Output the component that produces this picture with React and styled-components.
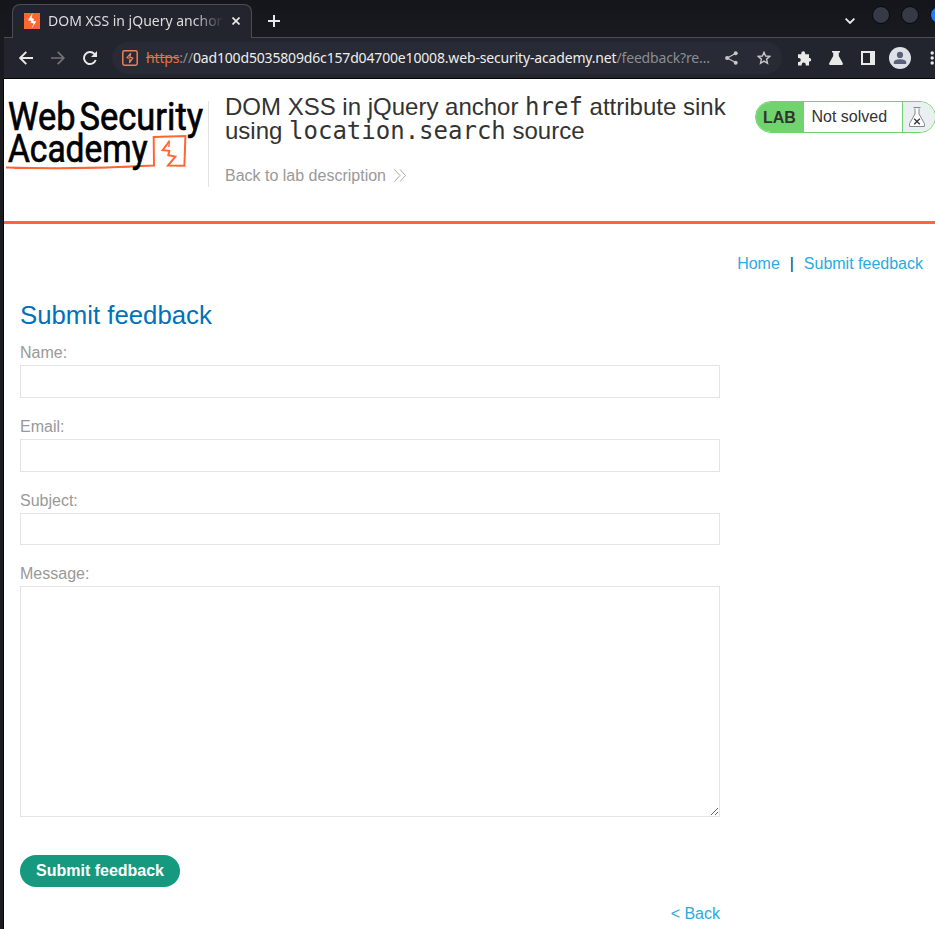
import React from 'react';
import styled, { createGlobalStyle } from 'styled-components';

const GlobalStyle = createGlobalStyle`
  * { box-sizing: border-box; }
  html, body { margin: 0; padding: 0; overflow: hidden; }
  body { background: #fff; font-family: "Liberation Sans", Arial, sans-serif; font-size: 16px; color: #333332; }
`;

const Desktop = styled.div`
  width: 935px;
  height: 929px;
  padding-left: 4px;
  overflow: hidden;
  background: linear-gradient(90deg, #1b1b20 0 3px, #08080a 3px 4px, #fff 4px);
`;

const Chrome = styled.div`
  height: 79px;
  margin-left: -4px;
  padding-left: 4px;
  background: linear-gradient(180deg, #15161c, #191a20 36px);
  font-family: "Noto Sans", sans-serif;
  overflow: hidden;
`;

const TabStrip = styled.div`
  height: 38px;
  display: flex;
  align-items: flex-end;
  border-bottom: 1px solid #4b4d54;
`;

const Tab = styled.div`
  display: flex;
  flex: none;
  align-items: center;
  width: 240px;
  height: 34px;
  margin: 0 0 -1px 8px;
  padding: 0 9px 1px 11px;
  border: 1px solid #4b4d54;
  border-bottom: 0;
  border-radius: 8px 8px 0 0;
  background: #23252e;
`;

const TabTitle = styled.div`
  flex: none;
  width: 176px;
  margin-left: 8px;
  overflow: hidden;
  white-space: nowrap;
  font-size: 14px;
  line-height: 20px;
  color: #dcdcdc;
  mask-image: linear-gradient(90deg, #000 145px, transparent 176px);
`;

const Icon = styled.svg`
  display: block;
  flex: none;
  width: ${p => p.$w}px;
  height: ${p => p.$h || p.$w}px;
  margin-left: ${p => p.$ml || 0}px;
  margin-top: ${p => p.$mt || 0}px;
  color: ${p => p.$color || '#e9e9e7'};
  fill: none;
  stroke: currentColor;
`;

const StripButton = styled.div`
  display: flex;
  align-items: center;
  height: 33px;
  margin-left: ${p => p.$ml}px;
`;

const WindowDots = styled.div`
  display: flex;
  gap: 11px;
  align-self: flex-start;
  margin: 6px 0 0 17px;
`;

const Dot = styled.div`
  flex: none;
  width: 18px;
  height: 18px;
  border: 1px solid #08090c;
  border-radius: 50%;
  background: ${p => (p.$active ? '#2777ff' : '#353a46')};
`;

const Toolbar = styled.div`
  display: flex;
  align-items: center;
  width: 931px;
  height: 41px;
  border-bottom: 1px solid #050506;
  background: #23252e;
`;

const AddressBar = styled.div`
  display: flex;
  align-items: center;
  flex: none;
  width: 670px;
  height: 32px;
  margin-left: 15px;
  padding-left: 10px;
  border-radius: 16px;
  background: #282a35;
`;

const Url = styled.div`
  flex: none;
  width: 564px;
  margin-left: 8px;
  white-space: nowrap;
  font-size: 14px;
  line-height: 20px;
  letter-spacing: -0.165px;
  color: #8b8d93;
`;

const Scheme = styled.span`
  color: #e2714c;
  text-decoration: line-through;
`;

const Host = styled.span`
  color: #eeeeec;
`;

const Avatar = styled.div`
  flex: none;
  width: 22px;
  height: 22px;
  margin-left: 14px;
  border-radius: 50%;
  background: #dee1e8;
`;

const LabHeader = styled.header`
  display: flex;
  align-items: flex-start;
  width: 931px;
  height: 145px;
  border-bottom: 3px solid #ff6633;
`;

const Logo = styled.svg`
  display: block;
  flex: none;
  width: 204px;
  height: 100px;
  font-family: Roboto, sans-serif;
  font-size: 38px;
  font-weight: 400;
`;

const TitleBlock = styled.div`
  flex: none;
  width: 530px;
  height: 86px;
  margin-top: 22px;
  padding-left: 16px;
  border-left: 1px solid #e2e2e2;
`;

const Title = styled.h2`
  margin: -6px 0 0;
  font-size: 24px;
  font-weight: 400;
  line-height: 24px;
  white-space: nowrap;
`;

const Code = styled.code`
  font-family: "DejaVu Sans Mono", monospace;
  font-size: 24px;
`;

const BackToLab = styled.a`
  display: flex;
  align-items: center;
  margin-top: 24px;
  line-height: 18px;
  color: #999;
`;

const LabStatus = styled.div`
  display: flex;
  flex: none;
  width: 181px;
  height: 32px;
  margin: 22px 0 0 17px;
  border: 1px solid #70d36e;
  border-radius: 16px;
  overflow: hidden;
  line-height: 30px;
`;

const LabTag = styled.div`
  width: 48px;
  padding-left: 7px;
  background: #70d36e;
  font-weight: 700;
  line-height: 32px;
`;

const LabText = styled.div`
  width: 98px;
  padding-left: 7.5px;
`;

const LabFlask = styled.div`
  flex: 1;
  border-left: 1px solid #70d36e;
  background: #eaeff2;
`;

const Nav = styled.nav`
  display: flex;
  justify-content: flex-end;
  gap: 10px;
  height: 74px;
  padding: 31px 12px 0 0;
  line-height: 18px;
`;

const Link = styled.a`
  color: #29abe2;
`;

const Separator = styled.span`
  width: 4px;
  text-align: center;
  color: #0a3c55;
`;

const Form = styled.form`
  width: 700px;
  margin-left: 16px;
`;

const Heading = styled.h1`
  height: 46px;
  margin: 0;
  font-size: 25.75px;
  font-weight: 400;
  line-height: 34px;
  color: #0071bc;
`;

const Label = styled.label`
  display: block;
  height: 21px;
  line-height: 18px;
  color: #999;
`;

const Input = styled.input`
  display: block;
  width: 700px;
  height: ${p => p.$h}px;
  margin: 0 0 20px;
  padding: 6px;
  border: 1px solid #e4e4e4;
  border-radius: 0;
  background: #fff;
  outline: 0;
`;

const TextArea = styled.textarea`
  display: block;
  width: 700px;
  height: 231px;
  margin: 0 0 38px;
  border: 1px solid #e4e4e4;
  background: #fff;
  resize: both;
  outline: 0;
`;

const Submit = styled.button`
  display: block;
  width: 160px;
  height: 32px;
  margin: 0;
  padding: 0;
  border: 0;
  border-radius: 16px;
  background: #159a80;
  color: #fff;
  font: 700 16px/32px "Liberation Sans", Arial, sans-serif;
`;

const BackRow = styled.div`
  margin-top: 18px;
  text-align: right;
  line-height: 18px;
`;

export default function App() {
  return (
    <>
      <GlobalStyle />
      <Desktop>
        <Chrome>
          <TabStrip>
            <Tab>
              <Icon $w={16} viewBox="0 0 16 16" stroke="none">
                <path d="M0 0H16V16H0Z" fill="#ff6633" stroke="none" />
                <path d="M8.6 0 4 7.2 7.3 8 6.5 9.8 9.7 10.4 7.3 16 12.3 8.6 9.2 7.8 10 5.9 7.6 5.1Z" fill="#fff" stroke="none" />
              </Icon>
              <TabTitle>DOM XSS in jQuery anchor</TabTitle>
              <Icon $w={8} $ml={8} viewBox="0 0 8 8" strokeWidth="1.7">
                <path d="M.5.5 7.5 7.5M7.5.5.5 7.5" />
              </Icon>
            </Tab>
            <StripButton $ml={16}>
              <Icon $w={12} viewBox="0 0 12 12" strokeWidth="2"><path d="M6 0V12M0 6H12" /></Icon>
            </StripButton>
            <StripButton $ml={565}>
              <Icon $w={10} $h={6} viewBox="0 0 10 6" strokeWidth="1.8"><path d="M.6.6 5 5 9.4.6" /></Icon>
            </StripButton>
            <WindowDots>
              <Dot />
              <Dot />
              <Dot $active />
            </WindowDots>
          </TabStrip>
          <Toolbar>
            <Icon $w={14} $ml={15} viewBox="0 0 14 14" strokeWidth="1.9"><path d="M14 7H1.5M7.3.8 1.2 7l6.1 6.2" /></Icon>
            <Icon $w={14} $ml={18} $color="#727379" viewBox="0 0 14 14" strokeWidth="1.7"><path d="M0 7H12.5M6.7.8 12.8 7l-6.1 6.2" /></Icon>
            <Icon $w={14} $ml={18} viewBox="0 0 14 14" strokeWidth="1.9">
              <path d="M12.7 9A6 6 0 1 1 11.4 2.9L12.8 4.4" />
              <path d="M14 0V6H8Z" fill="currentColor" stroke="none" />
            </Icon>
            <AddressBar>
              <Icon $w={16} $color="#ef8055" viewBox="0 0 16 16" strokeWidth="1.5">
                <rect x=".8" y=".8" width="14.4" height="14.4" rx="1.6" />
                <path d="M8.8 3.2 5 7.7 7.5 8.5M8.8 3.2 7.9 7.2 10.8 8 7.4 12.8 8 9" strokeWidth="1.2" />
              </Icon>
              <Url><Scheme>https</Scheme>://<Host>0ad100d5035809d6c157d04700e10008.web-security-academy.net</Host>/feedback?re…</Url>
              <Icon $w={13} $h={14} $ml={15} $color="#c5c6c7" viewBox="0 0 13 14" strokeWidth="1.2">
                <path d="M11 2.2 2.2 7 11 11.8" />
                <g fill="currentColor" stroke="none"><circle cx="10.7" cy="2.3" r="2" /><circle cx="2.2" cy="7" r="2.1" /><circle cx="10.7" cy="11.7" r="2" /></g>
              </Icon>
              <Icon $w={14} $ml={19} $color="#c5c6c7" viewBox="0 0 14 14" strokeWidth="1.4">
                <path d="M7 1.3 8.6 5 12.7 5.4 9.6 8.1 10.5 12.3 7 10.1 3.5 12.3 4.4 8.1 1.3 5.4 5.4 5Z" />
              </Icon>
            </AddressBar>
            <Icon $w={15} $ml={15} viewBox="0 0 15 15">
              <path d="M1 3.2H4.3V2.3A1.9 1.9 0 0 1 8.2 2.3V3.2H12V7H12.9A1.9 1.9 0 0 1 12.9 10.6H12V14.5H8.7V13.6A2 2 0 0 0 4.7 13.6V14.5H1V10.9H1.8A2 2 0 0 0 1.8 6.9H1Z" fill="currentColor" stroke="none" />
            </Icon>
            <Icon $w={14} $ml={17} viewBox="0 0 14 14">
              <path d="M3 0H11V1.6H9.8V5L13.7 12Q14.3 14 12.7 14H1.3Q-.3 14 .3 12L4.2 5V1.6H3Z" fill="currentColor" stroke="none" />
            </Icon>
            <Icon $w={14} $ml={18} viewBox="0 0 14 14">
              <path d="M0 0H14V14H0ZM2 2V12H9V2Z" fillRule="evenodd" fill="currentColor" stroke="none" />
            </Icon>
            <Avatar>
              <Icon $w={22} $color="#59627a" viewBox="0 0 22 22">
                <g fill="currentColor" stroke="none"><circle cx="11" cy="7.9" r="3.1" /><path d="M4.8 17V15Q5.5 12.3 11 12.3T17.2 15V17Z" /></g>
              </Icon>
            </Avatar>
            <Icon $w={4} $h={14} $ml={19} viewBox="0 0 4 14">
              <g fill="currentColor" stroke="none"><circle cx="2.2" cy="2" r="1.7" /><circle cx="2.2" cy="7" r="1.7" /><circle cx="2.2" cy="12" r="1.7" /></g>
            </Icon>
          </Toolbar>
        </Chrome>

        <LabHeader>
          <Logo viewBox="4 79 204 100">
            <g fill="none" stroke="#ff6633" strokeWidth="2">
              <path d="M6 167.5C60 169 110 168 154 165.6L153.7 137 185.4 136 184.4 165.8 168 165.6 175.3 156.6 168.3 155.3 169.3 150.8 162.7 150.2 169.5 141" />
              <path d="M169.3 140.5 168.9 147" strokeWidth="1.4" />
              <path d="M14 168.5Q70 169.5 130 167" strokeWidth="1" />
            </g>
            <g fill="#000" stroke="#000" strokeWidth=".7">
              <text x="8" y="129.7" textLength="67.5" lengthAdjust="spacingAndGlyphs">Web</text>
              <text x="79.5" y="129.7" textLength="123.5" lengthAdjust="spacingAndGlyphs">Security</text>
              <text x="8" y="162.3" textLength="139.5" lengthAdjust="spacingAndGlyphs">Academy</text>
            </g>
          </Logo>
          <TitleBlock>
            <Title>DOM XSS in jQuery anchor <Code>href</Code> attribute sink<br />using <Code>location.search</Code> source</Title>
            <BackToLab>
              Back to lab description
              <Icon $w={12} $h={13} $ml={8} $mt={-2} $color="#a0a0a0" viewBox="0 0 12 13"><path d="M.5.5 6 6.5.5 12.5M6 .5l5.5 6L6 12.5" strokeWidth=".9" /></Icon>
            </BackToLab>
          </TitleBlock>
          <LabStatus>
            <LabTag>LAB</LabTag>
            <LabText>Not solved</LabText>
            <LabFlask>
              <Icon $w={16} $h={20} $ml={6} $mt={5} $color="#85888a" viewBox="0 0 16 20">
                <path d="M6 1.5V7L.6 16.5V19.5H15.4V16.5L10 7V1.5" fill="#fff" />
                <path d="M4.5.5H11.5" />
                <path d="M5.2 11.7 10.8 17.3M10.8 11.7 5.2 17.3" stroke="#333" strokeWidth="1.3" />
              </Icon>
            </LabFlask>
          </LabStatus>
        </LabHeader>

        <Nav>
          <Link>Home</Link>
          <Separator>|</Separator>
          <Link>Submit feedback</Link>
        </Nav>

        <Form>
          <Heading>Submit feedback</Heading>
          <Label>Name:</Label>
          <Input $h={33} />
          <Label>Email:</Label>
          <Input $h={33} />
          <Label>Subject:</Label>
          <Input $h={32} />
          <Label>Message:</Label>
          <TextArea />
          <Submit type="button">Submit feedback</Submit>
          <BackRow><Link>&lt; Back</Link></BackRow>
        </Form>
      </Desktop>
    </>
  );
}
